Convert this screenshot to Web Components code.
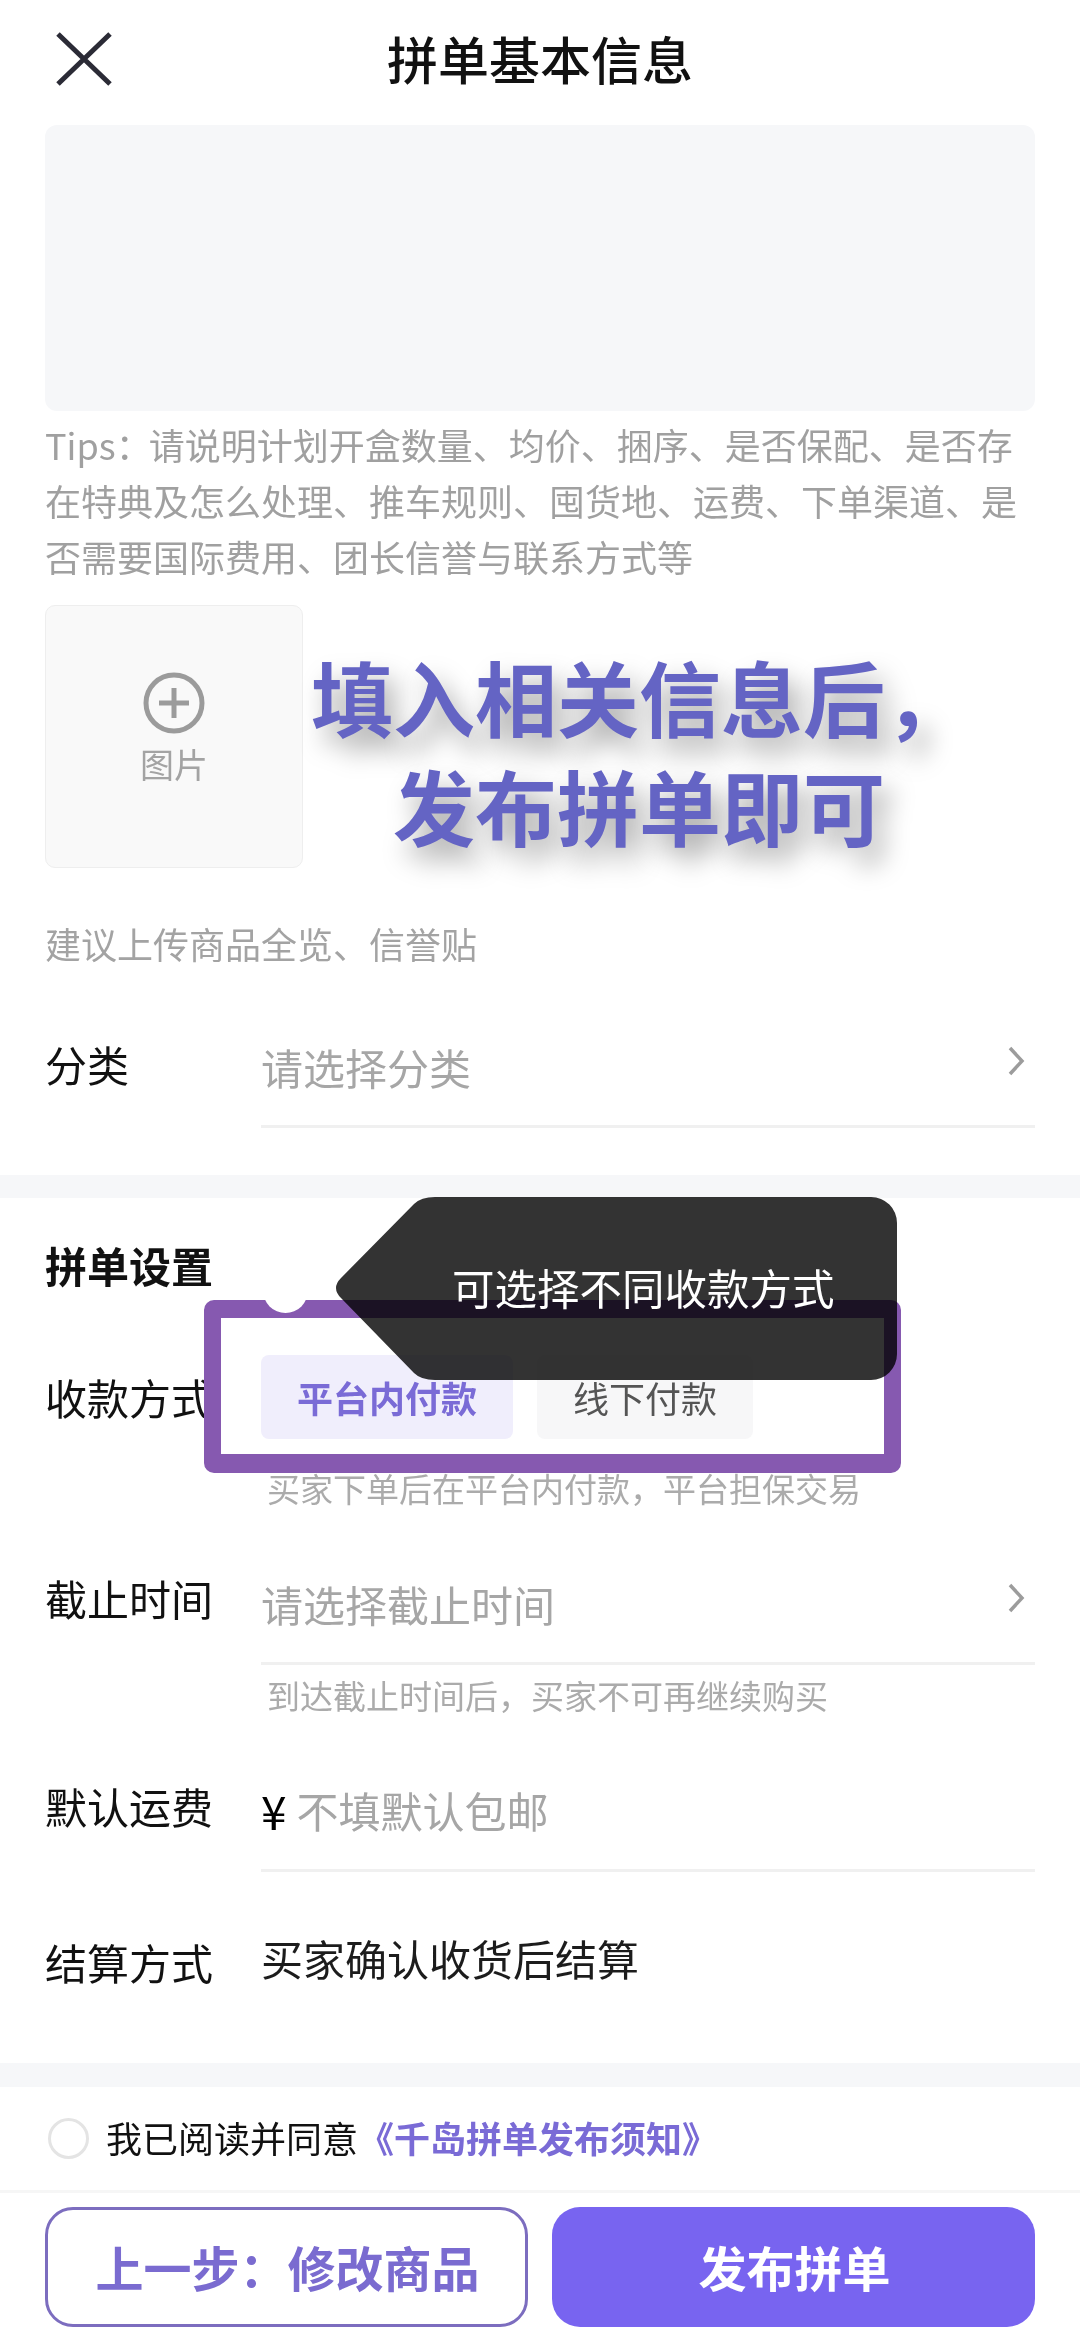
<!DOCTYPE html>
<html lang="zh-CN">
<head>
<meta charset="utf-8">
<title>拼单基本信息</title>
<style>
  html, body { margin:0; padding:0; background:#fff; }
  body {
    position:relative; width:1080px; height:2342px; overflow:hidden;
    font-family:"Noto Sans CJK SC", "Noto Sans", sans-serif; color:#111;
  }
</style>
</head>
<body>
  <top-bar>拼单基本信息</top-bar>
  <desc-box></desc-box>
  <image-upload></image-upload>

  <form-row label="分类" hint="请选择分类" arrow style="--gap:63px;--pad:3px;--low:28px"></form-row>
  <band-gap style="--before:47px;--h:23px"></band-gap>

  <section-title>拼单设置</section-title>
  <pay-choice></pay-choice>
  <small-note style="--gap:26px">买家下单后在平台内付款，平台担保交易</small-note>

  <form-row label="截止时间" hint="请选择截止时间" arrow style="--gap:57px;--pad:6px;--low:28px"></form-row>
  <small-note style="--gap:7px">到达截止时间后，买家不可再继续购买</small-note>

  <form-row label="默认运费" hint="不填默认包邮" prefix="¥" style="--gap:58px;--pad:4px;--low:29px"></form-row>
  <form-row label="结算方式" value="买家确认收货后结算" plain style="--gap:60px;--pad:0px;--low:0px"></form-row>
  <band-gap style="--before:71px;--h:24px"></band-gap>

  <agree-row></agree-row>
  <bottom-bar></bottom-bar>

  <!-- annotations drawn over the screenshot -->
  <promo-text></promo-text>
  <mark-frame></mark-frame>
  <tip-bubble>可选择不同收款方式</tip-bubble>

<script>
const CHEVRON = `<svg width="18" height="30" viewBox="0 0 18 30" fill="none"><path d="M3 2 L15 15 L3 28" stroke="#9c9c9c" stroke-width="3.5"/></svg>`;

// petite base: markup + styles in an open shadow root
class Base extends HTMLElement {
  constructor() {
    super();
    this.attachShadow({ mode: 'open' });
  }
  connectedCallback() {
    this.shadowRoot.innerHTML = this.view();
  }
}

class TopBar extends Base {
  view() {
    return `<style>
      :host { display:block; position:relative; height:125px; }
      .row { height:115px; display:flex; align-items:center; justify-content:center; font-size:51px; font-weight:500; color:#111; }
      svg { position:absolute; left:56px; top:32px; }
    </style>
    <svg width="56" height="54" viewBox="0 0 56 54" fill="none"><path d="M2 2 L54 52 M54 2 L2 52" stroke="#2b2b36" stroke-width="5"/></svg>
    <div class="row"><slot></slot></div>`;
  }
}

class DescBox extends Base {
  view() {
    return `<style>
      :host { display:block; padding:0 45px; }
      .box { height:286px; background:#f6f7f9; border-radius:12px; }
      .tips { margin-top:5px; font-size:36px; line-height:56px; color:#a0a0a0; white-space:nowrap; }
      .tag { margin-right:-3px; }
    </style>
    <div class="box"></div>
    <div class="tips"><span class="tag">Tips：</span>请说明计划开盒数量、均价、捆序、是否保配、是否存<br>在特典及怎么处理、推车规则、囤货地、运费、下单渠道、是<br>否需要国际费用、团长信誉与联系方式等</div>`;
  }
}

class ImageUpload extends Base {
  view() {
    return `<style>
      :host { display:block; padding:21px 45px 0; }
      .cell {
        box-sizing:border-box; width:258px; height:263px; background:#f9f9f9; border:1.5px solid #eeeeee; border-radius:10px;
        display:flex; flex-direction:column; align-items:center; padding-top:66px;
      }
      .name { margin-top:6px; font-size:34px; line-height:48px; color:#a3a3a3; }
      .note { margin-top:47px; font-size:36px; line-height:56px; color:#a3a3a3; }
    </style>
    <div class="cell">
      <svg width="62" height="62" viewBox="0 0 62 62" fill="none" stroke="#9b9b9b">
        <circle cx="31" cy="31" r="28" stroke-width="5"/>
        <path d="M16 31 H46 M31 16 V46" stroke-width="5"/>
      </svg>
      <div class="name">图片</div>
    </div>
    <div class="note">建议上传商品全览、信誉贴</div>`;
  }
}

class FormRow extends Base {
  view() {
    const label = this.getAttribute('label');
    const hint = this.getAttribute('hint');
    const value = this.getAttribute('value');
    const prefix = this.getAttribute('prefix');
    return `<style>
      :host {
        display:grid; grid-template-columns:216px 1fr; padding:0 45px; margin-top:var(--gap);
        font-size:42px; line-height:60px;
      }
      .label { color:#111; }
      .field {
        display:flex; align-items:flex-start; padding:var(--pad) 0 var(--low);
        border-bottom:3px solid #f0f0f0;
      }
      :host([plain]) .field { border-bottom:0; margin-top:-4px; }
      .hint { color:#a6a6a6; }
      .val { color:#1c1c1c; }
      .prefix { color:#000; font-size:46px; font-weight:400; margin-right:10px; }
      svg { margin:9px 10px 0 auto; flex:none; }
    </style>
    <div class="label">${label}</div>
    <div class="field">
      ${prefix ? `<span class="prefix">${prefix}</span>` : ''}
      ${hint ? `<span class="hint">${hint}</span>` : ''}
      ${value ? `<span class="val">${value}</span>` : ''}
      ${this.hasAttribute('arrow') ? CHEVRON : ''}
    </div>`;
  }
}

class BandGap extends Base {
  view() {
    return `<style>
      :host { display:block; margin-top:var(--before); height:var(--h); background:#f6f7f9; }
    </style>`;
  }
}

class SectionTitle extends Base {
  view() {
    return `<style>
      :host { display:block; margin-top:37px; padding:0 45px; font-size:42px; line-height:60px; font-weight:700; color:#111; }
    </style><slot></slot>`;
  }
}

class PayChoice extends Base {
  view() {
    return `<style>
      :host {
        display:grid; grid-template-columns:216px 1fr; align-items:center;
        margin-top:60px; padding:0 45px;
      }
      .label { font-size:42px; line-height:60px; color:#111; white-space:nowrap; }
      .opts { display:flex; gap:24px; }
      .opt {
        height:84px; border-radius:8px; display:flex; align-items:center; justify-content:center;
        font-size:36px; background:#f7f7f8; color:#555; width:216px;
      }
      .opt.on { width:252px; background:#f0eefc; color:#7a6bd6; font-weight:700; }
    </style>
    <div class="label">收款方式</div>
    <div class="opts">
      <div class="opt on">平台内付款</div>
      <div class="opt">线下付款</div>
    </div>`;
  }
}

class SmallNote extends Base {
  view() {
    return `<style>
      :host { display:block; margin-top:var(--gap); padding-left:267px; font-size:33px; line-height:46px; color:#ababab; }
    </style><slot></slot>`;
  }
}

class AgreeRow extends Base {
  view() {
    return `<style>
      :host { display:flex; align-items:center; height:103px; padding-left:48px; font-size:36px; color:#111; }
      .dot { box-sizing:border-box; width:41px; height:41px; border-radius:50%; border:3px solid #e4e4e4; margin-right:17px; }
      .txt { margin-top:-3px; }
      .link { color:#7a6bd6; font-weight:700; }
    </style>
    <span class="dot"></span>
    <span class="txt">我已阅读并同意</span><span class="txt link">《千岛拼单发布须知》</span>`;
  }
}

class BottomBar extends Base {
  view() {
    return `<style>
      :host {
        display:flex; justify-content:space-between; padding:14px 45px 15px;
        border-top:3px solid #f6f6f6;
      }
      .btn {
        box-sizing:border-box; width:483px; height:120px; border-radius:28px; padding:0 0 2px 2px;
        display:flex; align-items:center; justify-content:center;
        font-size:48px; font-weight:700;
      }
      .back { border:3px solid #7c6dbf; color:#7a6bd0; background:#fff; }
      .go { background:#7864f0; color:#fff; }
    </style>
    <div class="btn back">上一步：修改商品</div>
    <div class="btn go">发布拼单</div>`;
  }
}

class PromoText extends Base {
  view() {
    return `<style>
      :host {
        position:absolute; left:311px; top:641px;
        font-size:82px; line-height:109px; font-weight:700; color:#6464c4;
        text-shadow:10px 16px 26px rgba(0,0,0,.36); white-space:nowrap;
      }
      .second { padding-left:82px; }
    </style>
    <div>填入相关信息后，</div>
    <div class="second">发布拼单即可</div>`;
  }
}

class MarkFrame extends Base {
  view() {
    return `<style>
      :host {
        position:absolute; left:204px; top:1300px; width:697px; height:173px; box-sizing:border-box;
        border:solid #8659b0; border-width:18px 17px 19px; border-radius:10px;
      }
      .notch { position:absolute; left:42px; top:-50px; width:45px; height:45px; border-radius:50%; background:#fff; }
    </style>
    <div class="notch"></div>`;
  }
}

class TipBubble extends Base {
  view() {
    // le fond se multiplie avec le cadre violet, le texte reste blanc
    return `<style>
      :host { position:absolute; left:335px; top:1197px; width:562px; height:183px; }
      svg { position:absolute; left:0; top:0; mix-blend-mode:multiply; }
      .text {
        position:absolute; left:117px; top:60px; font-size:42.5px; line-height:60px;
        color:#fff; white-space:nowrap;
      }
    </style>
    <svg width="562" height="183" viewBox="0 0 562 183">
      <path d="M100 0 H536 A26 26 0 0 1 562 26 V157 A26 26 0 0 1 536 183 H100 Q86 183 79 176 L6 101 Q-4 91 6 81 L79 7 Q86 0 100 0 Z" fill="#333333"/>
    </svg>
    <div class="text"><slot></slot></div>`;
  }
}

customElements.define('top-bar', TopBar);
customElements.define('desc-box', DescBox);
customElements.define('image-upload', ImageUpload);
customElements.define('form-row', FormRow);
customElements.define('band-gap', BandGap);
customElements.define('section-title', SectionTitle);
customElements.define('pay-choice', PayChoice);
customElements.define('small-note', SmallNote);
customElements.define('agree-row', AgreeRow);
customElements.define('bottom-bar', BottomBar);
customElements.define('promo-text', PromoText);
customElements.define('mark-frame', MarkFrame);
customElements.define('tip-bubble', TipBubble);
</script>
</body>
</html>
